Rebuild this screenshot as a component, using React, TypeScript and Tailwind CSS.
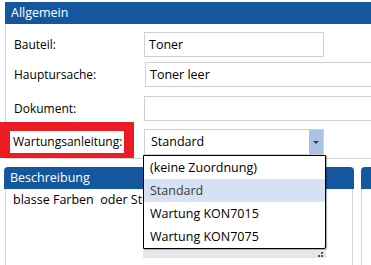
import React from "react";

const font = { fontFamily: '"Open Sans", "Noto Sans", sans-serif' };

export default function App() {
  return (
    <div
      className="relative w-[371px] h-[265px] overflow-hidden bg-white text-[12px] text-black"
      style={font}
    >
      {/* Allgemein panel */}
      <div className="ml-[5px] mt-[2px] flex flex-col">
        <div className="h-[22px] bg-[#15579f] text-white text-[12.5px] leading-[22px] pl-[6px]">
          Allgemein
        </div>
        <div className="border-l border-b border-[#d4d4d4] h-[135px] flex flex-col pl-[8px]">
          <div className="mt-[8px] flex items-center h-[25px]">
            <div className="w-[130px]">Bauteil:</div>
            <div className="w-[180px] h-[25px] border border-[#d0d0d0] pl-[4px] text-[12.5px] leading-[23px]">
              Toner
            </div>
          </div>
          <div className="mt-[5px] flex items-center h-[25px]">
            <div className="w-[131px]">Hauptursache:</div>
            <div className="flex-1 h-[25px] border border-r-0 border-[#d0d0d0] pl-[4px] text-[12.5px] leading-[23px]">
              Toner leer
            </div>
          </div>
          <div className="mt-[9px] flex items-center h-[25px]">
            <div className="w-[130px]">Dokument:</div>
            <div className="flex-1 h-[25px] border border-r-0 border-[#d0d0d0]" />
          </div>
          <div className="mt-[8px] flex items-center h-[26px]">
            <div className="w-[130px]">Wartungsanleitung:</div>
            <div className="w-[180px] h-[26px] border border-[#d0d0d0] flex">
              <div className="flex-1 pl-[6px] text-[12.5px] leading-[24px]">Standard</div>
              <div className="w-[14px] h-full bg-[#aac2e6] flex items-center justify-center">
                <svg width="6" height="3" viewBox="0 0 6 3">
                  <path d="M0 0H6L3 3Z" fill="#3c3c3c" />
                </svg>
              </div>
            </div>
          </div>
        </div>
      </div>

      {/* Beschreibung panel + right panel */}
      <div className="mt-[8px] flex">
        <div className="ml-[4px] w-[358px] flex flex-col">
          <div className="h-[22px] bg-[#15579f] rounded-t-[4px] text-white text-[12.5px] leading-[22px] pl-[6px]">
            Beschreibung
          </div>
          <div className="h-[80px] border-l border-r border-[#d4d4d4] mx-[1px] pl-[7px] pt-[2px] text-[12.5px] leading-[18px]">
            blasse Farben&nbsp; oder Streifen
          </div>
        </div>
        <div className="ml-[7px] w-[10px] flex flex-col">
          <div className="h-[22px] bg-[#15579f] rounded-tl-[4px]" />
          <div className="h-[80px] border-l border-[#d4d4d4]" />
        </div>
      </div>

      {/* red highlight annotation */}
      <div className="absolute left-0 top-[122px] w-[134px] h-[36px] bg-[#ec1c24] pl-[10px] pr-[10px] pt-[9px] pb-[5px]">
        <div className="bg-white h-full pl-[3px] leading-[22px]">Wartungsanleitung:</div>
      </div>

      {/* dropdown list */}
      <div className="absolute left-[143px] top-[155px] w-[183px] flex flex-col">
        <div className="border border-black rounded-br-[2px] bg-white shadow-[1px_1px_1px_rgba(0,0,0,0.35)] text-[12.5px]">
          <div className="h-[23px] leading-[23px] pl-[6px]">(keine Zuordnung)</div>
          <div className="h-[23px] leading-[23px] pl-[6px] bg-[#d6e2f3] text-[#3a3a3a]">Standard</div>
          <div className="h-[23px] leading-[23px] pl-[6px]">Wartung KON7015</div>
          <div className="h-[23px] leading-[23px] pl-[6px]">Wartung KON7075</div>
        </div>
        <div className="mt-[1px] h-[8px] bg-[#e6e6e6] flex justify-end items-end pr-[3px] pb-[1px]">
          <svg width="5" height="5" viewBox="0 0 5 5">
            <rect x="3" y="0" width="2" height="2" fill="#555" />
            <rect x="0" y="3" width="2" height="2" fill="#555" />
            <rect x="3" y="3" width="2" height="2" fill="#555" />
          </svg>
        </div>
      </div>
    </div>
  );
}
